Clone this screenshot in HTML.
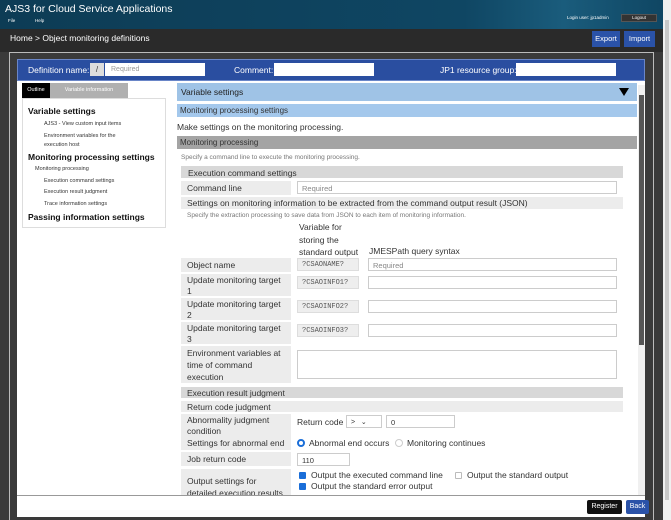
<!DOCTYPE html><html><head><style>
*{box-sizing:border-box;margin:0;padding:0}
body{width:671px;height:520px;overflow:hidden;font-family:"Liberation Sans",sans-serif;background:#3a3a3a;position:relative;font-size:8px}
.a{position:absolute}
.lbl{position:absolute;background:#ececec;color:#333;font-size:8.5px;padding:1px 6px;line-height:12px;overflow:hidden}
.inp{position:absolute;background:#fff;border:1px solid #ccc;font-size:7.5px;color:#888;padding:1px 4px;line-height:9px}
.gi{position:absolute;background:#eee;border:1px solid #ddd;font-size:7px;color:#555;padding:2px 4px;font-family:"Liberation Mono",monospace}
.t{position:absolute;font-size:8.5px;color:#333;white-space:nowrap}
</style></head><body>
<div class="a" style="left:0;top:0;width:663px;height:29px;background:linear-gradient(90deg,#0d3c55,#0f4663 70%,#1a5c7c 85%,#0f4663)"></div>
<div class="a" style="left:5px;top:3px;color:#fff;font-size:10.5px">AJS3 for Cloud Service Applications</div>
<div class="a" style="left:8px;top:18px;color:#fff;font-size:4.5px">File</div>
<div class="a" style="left:35px;top:18px;color:#fff;font-size:4.5px">Help</div>
<div class="a" style="left:567px;top:15px;color:#fff;font-size:4.5px">Login user: jp1admin</div>
<div class="a" style="left:621px;top:14px;width:36px;height:8px;background:#333;border:1px solid #555;color:#fff;font-size:4.5px;text-align:center;line-height:6px">Logout</div>
<div class="a" style="left:0;top:29px;width:663px;height:23px;background:#2a2a2a"></div>
<div class="a" style="left:10px;top:33px;color:#fff;font-size:8.5px">Home &gt; Object monitoring definitions</div>
<div class="a" style="left:592px;top:31px;width:28px;height:16px;background:#2a52a8;color:#fff;font-size:7.5px;text-align:center;line-height:16px">Export</div>
<div class="a" style="left:624px;top:31px;width:31px;height:16px;background:#2a52a8;color:#fff;font-size:7.5px;text-align:center;line-height:16px">Import</div>
<div class="a" style="left:9px;top:52px;width:645px;height:468px;border:1px solid #bbb;border-bottom:none;background:#3a3a3a"></div>
<div class="a" style="left:663px;top:0;width:8px;height:520px;background:#f0f0f0"></div>
<div class="a" style="left:665px;top:20px;width:4px;height:480px;background:#c8c8c8"></div>
<div class="a" style="left:17px;top:59px;width:628px;height:22px;background:#2a4ea0;border:1px solid #6a86c8"></div>
<div class="a" style="left:28px;top:65px;color:#fff;font-size:8.5px">Definition name:</div>
<div class="a" style="left:90px;top:63px;width:14px;height:13px;background:#ddd;color:#333;font-size:8px;text-align:center;line-height:13px">/</div>
<div class="a" style="left:105px;top:63px;width:100px;height:13px;background:#fff;color:#999;font-size:7px;padding-left:6px;line-height:13px">Required</div>
<div class="a" style="left:234px;top:65px;color:#fff;font-size:8.5px">Comment:</div>
<div class="a" style="left:274px;top:63px;width:100px;height:13px;background:#fff"></div>
<div class="a" style="left:440px;top:65px;color:#fff;font-size:8.5px">JP1 resource group:</div>
<div class="a" style="left:516px;top:63px;width:100px;height:13px;background:#fff"></div>
<div class="a" style="left:17px;top:81px;width:628px;height:414px;background:#fff"></div>
<div class="a" style="left:22px;top:83px;width:28px;height:15px;background:#000;color:#fff;font-size:5.5px;text-align:center;line-height:15px">Outline</div>
<div class="a" style="left:50px;top:83px;width:78px;height:15px;background:#b0b0b0;color:#fff;font-size:5.5px;text-align:center;line-height:15px">Variable information</div>
<div class="a" style="left:22px;top:98px;width:144px;height:130px;border:1px solid #ddd"></div>
<div class="a" style="left:28px;top:106px;font-size:8.5px;font-weight:bold;color:#111">Variable settings</div>
<div class="a" style="left:44px;top:121px;font-size:5.5px;color:#333">AJS3 - View custom input items</div>
<div class="a" style="left:44px;top:132px;font-size:5.5px;color:#333;line-height:9px">Environment variables for the<br>execution host</div>
<div class="a" style="left:28px;top:152px;font-size:8.5px;font-weight:bold;color:#111">Monitoring processing settings</div>
<div class="a" style="left:35px;top:166px;font-size:5.5px;color:#333">Monitoring processing</div>
<div class="a" style="left:44px;top:178px;font-size:5.5px;color:#333">Execution command settings</div>
<div class="a" style="left:44px;top:189px;font-size:5.5px;color:#333">Execution result judgment</div>
<div class="a" style="left:44px;top:201px;font-size:5.5px;color:#333">Trace information settings</div>
<div class="a" style="left:28px;top:212px;font-size:8.5px;font-weight:bold;color:#111">Passing information settings</div>
<div class="a" style="left:177px;top:83px;width:460px;height:18px;background:#9fc3e6"></div>
<div class="a" style="left:181px;top:87px;font-size:8.5px;color:#222">Variable settings</div>
<div class="a" style="left:619px;top:88px;width:0;height:0;border-left:5px solid transparent;border-right:5px solid transparent;border-top:8px solid #000"></div>
<div class="a" style="left:638px;top:85px;width:7px;height:410px;background:#f0f0f0"></div>
<div class="a" style="left:639px;top:95px;width:5px;height:250px;background:#555"></div>
<div class="a" style="left:177px;top:104px;width:460px;height:13px;background:#a4c8ec"></div>
<div class="t" style="left:180px;top:106px;font-size:8px">Monitoring processing settings</div>
<div class="t" style="left:177px;top:122px">Make settings on the monitoring processing.</div>
<div class="a" style="left:177px;top:136px;width:460px;height:13px;background:#a4a4a4"></div>
<div class="t" style="left:180px;top:138px;font-size:8px">Monitoring processing</div>
<div class="t" style="left:181px;top:154px;font-size:6.5px;color:#777">Specify a command line to execute the monitoring processing.</div>
<div class="a" style="left:181px;top:166px;width:442px;height:12px;background:#d8d8d8"></div>
<div class="t" style="left:188px;top:168px">Execution command settings</div>
<div class="lbl" style="left:181px;top:181px;width:110px;height:14px">Command line</div>
<div class="inp" style="left:297px;top:181px;width:320px;height:13px;line-height:11px">Required</div>
<div class="a" style="left:181px;top:197px;width:442px;height:12px;background:#ececec"></div>
<div class="t" style="left:187px;top:198px">Settings on monitoring information to be extracted from the command output result (JSON)</div>
<div class="t" style="left:187px;top:212px;font-size:6.5px;color:#777">Specify the extraction processing to save data from JSON to each item of monitoring information.</div>
<div class="t" style="left:299px;top:221px;line-height:12.5px">Variable for<br>storing the<br>standard output</div>
<div class="t" style="left:369px;top:246px">JMESPath query syntax</div>
<div class="lbl" style="left:181px;top:258px;width:110px;height:14px">Object name</div>
<div class="gi" style="left:297px;top:258px;width:62px;height:13px">?CSAONAME?</div>
<div class="inp" style="left:368px;top:258px;width:249px;height:13px;line-height:11px">Required</div>
<div class="lbl" style="left:181px;top:274px;width:110px;height:22px;line-height:10.5px">Update monitoring target<br>1</div>
<div class="gi" style="left:297px;top:276px;width:62px;height:13px">?CSAOINFO1?</div>
<div class="inp" style="left:368px;top:276px;width:249px;height:13px"></div>
<div class="lbl" style="left:181px;top:298px;width:110px;height:22px;line-height:10.5px">Update monitoring target<br>2</div>
<div class="gi" style="left:297px;top:300px;width:62px;height:13px">?CSAOINFO2?</div>
<div class="inp" style="left:368px;top:300px;width:249px;height:13px"></div>
<div class="lbl" style="left:181px;top:322px;width:110px;height:22px;line-height:10.5px">Update monitoring target<br>3</div>
<div class="gi" style="left:297px;top:324px;width:62px;height:13px">?CSAOINFO3?</div>
<div class="inp" style="left:368px;top:324px;width:249px;height:13px"></div>
<div class="lbl" style="left:181px;top:346px;width:110px;height:37px">Environment variables at<br>time of command<br>execution</div>
<div class="inp" style="left:297px;top:350px;width:320px;height:29px"></div>
<div class="a" style="left:181px;top:387px;width:442px;height:11px;background:#d8d8d8"></div>
<div class="t" style="left:187px;top:388px">Execution result judgment</div>
<div class="a" style="left:181px;top:401px;width:442px;height:11px;background:#ececec"></div>
<div class="t" style="left:187px;top:402px">Return code judgment</div>
<div class="lbl" style="left:181px;top:414px;width:110px;height:22px;line-height:10.5px">Abnormality judgment<br>condition</div>
<div class="t" style="left:297px;top:417px">Return code</div>
<div class="inp" style="left:346px;top:415px;width:36px;height:13px;color:#333;font-size:7px;line-height:11px">&gt; &nbsp;&nbsp;⌄</div>
<div class="inp" style="left:386px;top:415px;width:69px;height:13px;color:#333;line-height:11px">0</div>
<div class="lbl" style="left:181px;top:436px;width:110px;height:14px">Settings for abnormal end</div>
<div class="a" style="left:297px;top:439px;width:8px;height:8px;border-radius:50%;border:2.5px solid #1a6ed8"></div>
<div class="t" style="left:309px;top:438px">Abnormal end occurs</div>
<div class="a" style="left:395px;top:439px;width:8px;height:8px;border-radius:50%;border:1px solid #ccc"></div>
<div class="t" style="left:407px;top:438px">Monitoring continues</div>
<div class="lbl" style="left:181px;top:452px;width:110px;height:14px">Job return code</div>
<div class="inp" style="left:297px;top:453px;width:53px;height:13px;color:#333;line-height:11px">110</div>
<div class="lbl" style="left:181px;top:469px;width:110px;height:30px;padding-top:6px">Output settings for<br>detailed execution results</div>
<div class="a" style="left:299px;top:472px;width:7px;height:7px;background:#1a6ed8;border-radius:1px"></div>
<div class="t" style="left:311px;top:470px">Output the executed command line</div>
<div class="a" style="left:455px;top:472px;width:7px;height:7px;border:1px solid #bbb;border-radius:1px"></div>
<div class="t" style="left:467px;top:470px">Output the standard output</div>
<div class="a" style="left:299px;top:483px;width:7px;height:7px;background:#1a6ed8;border-radius:1px"></div>
<div class="t" style="left:311px;top:481px">Output the standard error output</div>
<div class="a" style="left:17px;top:495px;width:628px;height:22px;background:#fff;border-top:1px solid #999"></div>
<div class="a" style="left:587px;top:500px;width:35px;height:14px;background:#111;color:#fff;font-size:7px;text-align:center;line-height:14px;border-radius:2px">Register</div>
<div class="a" style="left:626px;top:500px;width:23px;height:14px;background:#2a52a8;color:#fff;font-size:7px;text-align:center;line-height:14px;border-radius:2px">Back</div>
</body></html>
